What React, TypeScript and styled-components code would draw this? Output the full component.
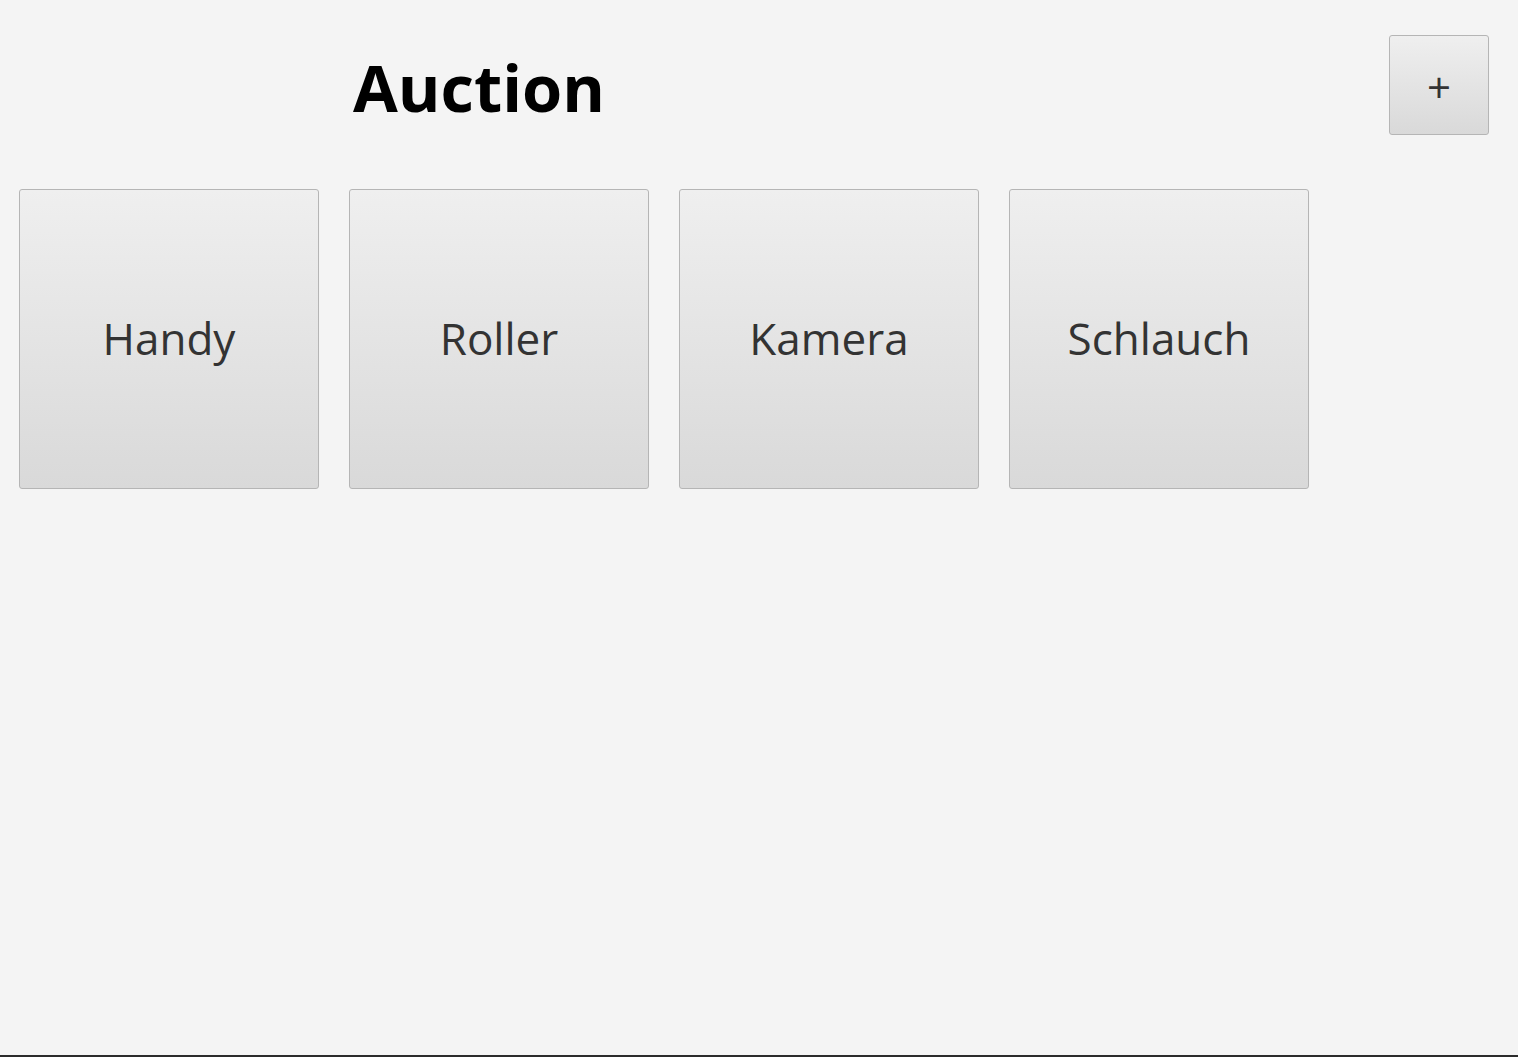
import React from "react";
import styled, { createGlobalStyle } from "styled-components";

const Global = createGlobalStyle`
  html, body { margin: 0; padding: 0; background: #f4f4f4; }
  body { font-family: "Open Sans", "Noto Sans", sans-serif; }
`;

const Window = styled.div`
  box-sizing: border-box;
  width: 1518px;
  height: 1057px;
  background: #f4f4f4;
  border-bottom: 2px solid #2b2b2b;
  display: flex;
  flex-direction: column;
`;

const Header = styled.header`
  display: flex;
  align-items: flex-start;
  justify-content: space-between;
  padding: 35px 29px 0 353px;
  height: 189px;
  box-sizing: border-box;
  flex-shrink: 0;
`;

const Title = styled.h1`
  margin: 0;
  margin-top: 20px;
  font-family: "Open Sans", sans-serif;
  font-weight: 700;
  font-size: 65px;
  line-height: 1;
  color: #000;
`;

const Tile = styled.button<{ $size: number; $font: number; $shift: number }>`
  box-sizing: border-box;
  width: ${(p) => p.$size}px;
  height: ${(p) => p.$size}px;
  border: 1px solid #b5b5b5;
  border-radius: 3px;
  background: linear-gradient(to bottom, #efefef, #d9d9d9);
  color: #333333;
  font-family: "Open Sans", sans-serif;
  font-size: ${(p) => p.$font}px;
  line-height: 1;
  padding: ${(p) => (p.$shift > 0 ? `${p.$shift}px 0 0 0` : `0 0 ${-p.$shift}px 0`)};
  display: flex;
  align-items: center;
  justify-content: center;
  cursor: pointer;
`;

const Grid = styled.div`
  display: flex;
  gap: 30px;
  padding-left: 19px;
`;

const items = ["Handy", "Roller", "Kamera", "Schlauch"];

export default function App() {
  return (
    <>
      <Global />
      <Window>
        <Header>
          <Title>Auction</Title>
          <Tile $size={100} $font={42} $shift={4}>+</Tile>
        </Header>
        <Grid>
          {items.map((i) => (
            <Tile key={i} $size={300} $font={44} $shift={-2}>
              {i}
            </Tile>
          ))}
        </Grid>
      </Window>
    </>
  );
}
